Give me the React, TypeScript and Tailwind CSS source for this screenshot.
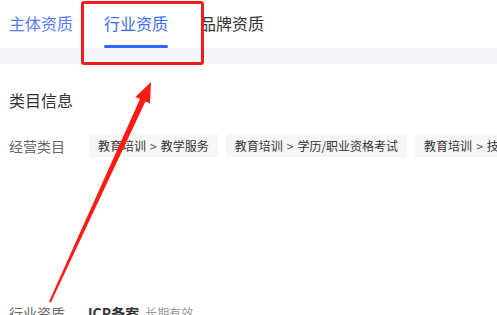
import React, { FC } from 'react';

const tags = [
  ['教育培训', '教学服务'],
  ['教育培训', '学历/职业资格考试'],
  ['教育培训', '技能培训'],
];

const font = { fontFamily: '"Noto Sans CJK SC", "Noto Sans", sans-serif' };

const App: FC = () => {
  return (
    <div className="relative w-[497px] h-[315px] overflow-hidden bg-white" style={font}>
      {/* tabs */}
      <div className="flex h-12 pl-[9px] text-[16px] leading-6">
        <div className="pt-[11px] text-[#5b7cf0]">主体资质</div>
        <div className="ml-[31px] flex flex-col pt-[11px] text-[#3b6cf4]">
          <span>行业资质</span>
          <span className="mt-[10px] h-[3px] rounded-full bg-[#2a6af6]" />
        </div>
        <div className="ml-[32px] pt-[11px] text-[#333]">品牌资质</div>
      </div>
      <div className="h-4 bg-[#f5f5f8]" />

      {/* content */}
      <div className="pl-[9px] pt-6">
        <div className="text-[16px] leading-6 text-[#333]">类目信息</div>
        <div className="mt-[22px] flex items-center">
          <div className="w-[80px] shrink-0 text-[14px] leading-5 text-[#666]">经营类目</div>
          <div className="flex shrink-0 gap-2 whitespace-nowrap">
            {tags.map(([a, b]) => (
              <div key={b} className="flex h-[23px] shrink-0 items-center rounded-[2px] bg-[#f5f6f7] px-[9px] text-[12px] text-[#333]">
                {a}
                <span className="mx-[4px] text-[#555]">&gt;</span>
                {b}
              </div>
            ))}
          </div>
        </div>
        <div className="mt-[146px] flex items-center whitespace-nowrap">
          <div className="w-[79px] shrink-0 text-[14px] leading-5 text-[#666]">行业资质</div>
          <div className="text-[14px] leading-5 font-bold text-[#333]">ICP备案</div>
          <div className="ml-[6px] text-[12px] leading-5 text-[#999]">长期有效</div>
        </div>
      </div>

      {/* annotation */}
      <div className="absolute left-[81px] top-[1px] h-[64px] w-[123px] rounded-[3px] border-[3px] border-[#f21c1c]" />
      <svg className="absolute left-0 top-0" width="497" height="315" viewBox="0 0 497 315">
        <polygon
          points="151,82 150,103.5 145.4,101.5 50.9,302.4 49.1,301.6 140,99 135.4,96.9"
          fill="#ff1a12"
        />
      </svg>
    </div>
  );
};

export default App;
